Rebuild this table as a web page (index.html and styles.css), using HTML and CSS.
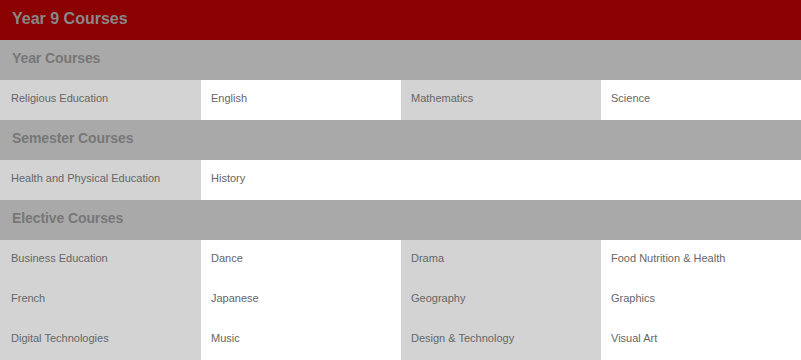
FILE: index.html
```html
<!DOCTYPE html>
<html>
<head>
<meta charset="utf-8">
<link rel="stylesheet" href="styles.css">
</head>
<body>
<div class="page">
  <div class="title">Year 9 Courses</div>
  <div class="section">Year Courses</div>
  <div class="grid">
    <div class="cell gray">Religious Education</div>
    <div class="cell">English</div>
    <div class="cell gray">Mathematics</div>
    <div class="cell">Science</div>
  </div>
  <div class="section">Semester Courses</div>
  <div class="grid">
    <div class="cell gray">Health and Physical Education</div>
    <div class="cell">History</div>
    <div class="cell"></div>
    <div class="cell"></div>
  </div>
  <div class="section">Elective Courses</div>
  <div class="grid">
    <div class="cell gray">Business Education</div>
    <div class="cell">Dance</div>
    <div class="cell gray">Drama</div>
    <div class="cell">Food Nutrition &amp; Health</div>
    <div class="cell gray">French</div>
    <div class="cell">Japanese</div>
    <div class="cell gray">Geography</div>
    <div class="cell">Graphics</div>
    <div class="cell gray">Digital Technologies</div>
    <div class="cell">Music</div>
    <div class="cell gray">Design &amp; Technology</div>
    <div class="cell">Visual Art</div>
  </div>
</div>
</body>
</html>
```
FILE: styles.css
```css
html, body {
  margin: 0;
  padding: 0;
  background: #ffffff;
}
.page {
  width: 801px;
  font-family: "Liberation Sans", Arial, sans-serif;
}
.title {
  height: 37px;
  line-height: 37px;
  padding-bottom: 3px;
  background: #8b0000;
  color: #888888;
  font-size: 16px;
  font-weight: bold;
  padding-left: 12px;
}
.section {
  height: 36px;
  line-height: 36px;
  padding-bottom: 4px;
  background: #a9a9a9;
  color: #777777;
  font-size: 14px;
  font-weight: bold;
  padding-left: 12px;
  letter-spacing: -0.1px;
}
.grid {
  display: grid;
  grid-template-columns: 201px 200px 200px 200px;
}
.cell {
  height: 36px;
  line-height: 36px;
  padding-bottom: 4px;
  font-size: 11px;
  color: #666666;
  padding-left: 10px;
  background: #ffffff;
}
.cell:nth-child(4n+1) {
  padding-left: 11px;
}
.cell.gray {
  background: #d3d3d3;
}
```
